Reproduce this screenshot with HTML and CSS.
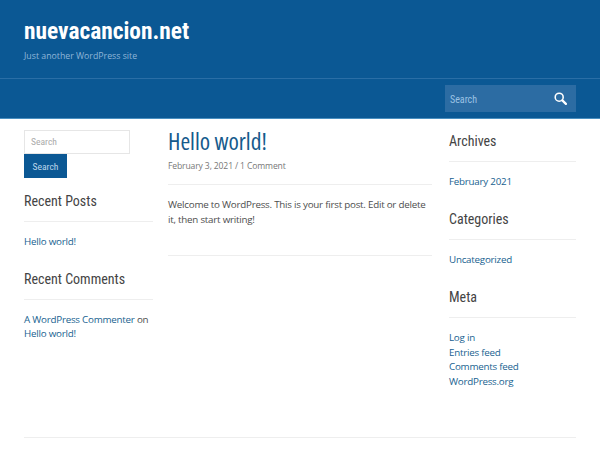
FILE: index.html
```html
<!DOCTYPE html>
<html lang="en">
<head>
<meta charset="utf-8">
<title>nuevacancion.net</title>
<link rel="stylesheet" href="styles.css">
</head>
<body>
<header class="masthead">
  <div class="branding">
    <h1 class="site-title">nuevacancion.net</h1>
    <p class="tagline">Just another WordPress site</p>
  </div>
  <nav class="navbar">
    <form class="top-search">
      <span class="top-search-label">Search</span>
      <svg class="top-search-icon" viewBox="0 0 14 14" width="13" height="13" aria-hidden="true"><circle cx="5.6" cy="5.6" r="4.3" fill="none" stroke="currentColor" stroke-width="1.7"/><path d="M9 9l3.8 3.8" fill="none" stroke="currentColor" stroke-width="2.4" stroke-linecap="round"/></svg>
    </form>
  </nav>
</header>
<div class="layout">
  <aside class="left-col">
    <div class="search-box">Search</div>
    <div class="search-button">Search</div>
    <h2 class="widget-title recent-posts">Recent Posts</h2>
    <p class="widget-body"><a>Hello world!</a></p>
    <h2 class="widget-title">Recent Comments</h2>
    <p class="widget-body"><a>A WordPress Commenter</a> on <a>Hello world!</a></p>
  </aside>
  <main class="content">
    <h2 class="post-title">Hello world!</h2>
    <p class="post-meta">February 3, 2021 / 1 Comment</p>
    <p class="post-text">Welcome to WordPress. This is your first post. Edit or delete it, then start writing!</p>
  </main>
  <aside class="right-col">
    <h2 class="widget-title">Archives</h2>
    <p class="widget-body"><a>February 2021</a></p>
    <h2 class="widget-title">Categories</h2>
    <p class="widget-body"><a>Uncategorized</a></p>
    <h2 class="widget-title meta-title">Meta</h2>
    <p class="widget-body"><a>Log in</a><br><a>Entries feed</a><br><a>Comments feed</a><br><a>WordPress.org</a></p>
  </aside>
</div>
<div class="footer-rule"></div>
</body>
</html>
```
FILE: styles.css
```css
* { box-sizing: border-box; }
html, body { margin: 0; padding: 0; }
body {
  width: 600px;
  height: 450px;
  overflow: hidden;
  background: #fff;
  color: #4d4d4d;
  font-family: "Open Sans", sans-serif;
  font-size: 9.8px;
  letter-spacing: -.24px;
  line-height: 14.5px;
}
h1, h2, p { margin: 0; font-weight: normal; letter-spacing: 0; }
p { letter-spacing: -.24px; }
a { color: #185f90; }
.masthead { background: #0b5894; height: 119px; border-bottom: 1px solid #4a8fc0; }
.branding { height: 79px; padding: 16px 24px 0; border-bottom: 1px solid #2a6ea6; }
.site-title {
  font-family: Roboto, sans-serif;
  font-stretch: 75%;
  font-size: 23.4px;
  font-weight: 700;
  line-height: 30px;
  color: #fff;
}
.tagline { margin-top: 3px; font-size: 8.75px; line-height: 14px; letter-spacing: 0; color: #8fb6d8; }
.navbar { display: flex; justify-content: flex-end; padding: 6px 24px 0; }
.top-search {
  width: 131px; height: 27px;
  display: flex; align-items: center; justify-content: space-between;
  padding: 0 9px 0 5px;
  background: #2c6ca3;
}
.top-search-label { font-family: Roboto, sans-serif; font-stretch: 75%; font-size: 10px; line-height: 14px; padding-top: 2px; letter-spacing: 0; color: #9cc3e3; }
.top-search-icon { color: #fff; }
.layout { display: flex; padding: 11px 24px 0; height: 318px; }
.left-col { width: 129px; flex: none; }
.content { width: 264px; flex: none; margin-left: 15px; height: 126px; border-bottom: 1px solid #eee; }
.right-col { width: 127px; flex: none; margin-left: 17px; }
.search-box {
  width: 106px; height: 24px; padding: 0 6px;
  border: 1px solid #e6e6e6;
  font-family: Roboto, sans-serif; font-stretch: 75%; font-size: 9.6px; line-height: 22px; letter-spacing: 0; color: #aaa;
}
.search-button {
  width: 43px; height: 24px;
  background: #0b5894; color: #bcd6ea; text-align: center;
  font-family: Roboto, sans-serif; font-stretch: 75%; font-size: 9.6px; line-height: 25px; letter-spacing: 0;
}
.widget-title {
  font-family: Roboto, sans-serif; font-stretch: 75%; font-size: 14px; line-height: 20px; color: #444;
  padding-bottom: 10px;
  border-bottom: 1px solid #eee;
  margin-bottom: 12px;
}
.recent-posts { margin-top: 13px; }
.widget-body { margin-bottom: 19px; padding-top: 1px; }
.right-col .widget-title:first-child { margin-top: 1px; }
.meta-title { padding-top: 1px; }
.post-title { font-size: 23.5px; font-stretch: 75%; line-height: 26px; color: #155a8c; margin-top: -2px; }
.post-meta { margin-top: 5px; padding-bottom: 11px; border-bottom: 1px solid #eee; font-size: 8.6px; letter-spacing: -.14px; line-height: 14px; color: #777; }
.post-text { margin-top: 13px; }
.footer-rule { margin: 0 24px; border-top: 1px solid #eee; }
```
